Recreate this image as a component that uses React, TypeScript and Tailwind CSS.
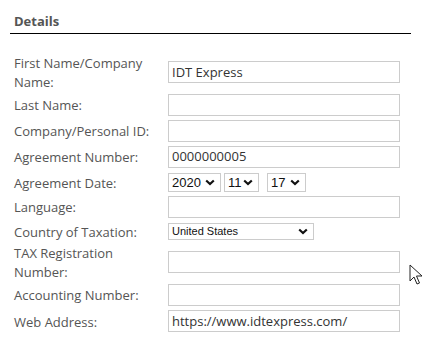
import React from "react";

const font = { fontFamily: '"Open Sans", "Liberation Sans", sans-serif' };
const arial = { fontFamily: '"Liberation Sans", Arial, sans-serif' };

function Chevron() {
  return (
    <svg width="10" height="7" viewBox="0 0 10 7">
      <path d="M1.2 1.5 L5 5 L8.8 1.5" fill="none" stroke="#111" strokeWidth="2.2" />
    </svg>
  );
}

function TextBox({ value = "" }: { value?: string }) {
  return (
    <div className="w-[232px] h-[22px] border border-[#cccccc] pl-[3px] flex items-center text-[13px] text-[#333] leading-none">
      {value}
    </div>
  );
}

function Select({ value, w, h = "h-[19px]", text = "text-[13px]" }: { value: string; w: string; h?: string; text?: string }) {
  return (
    <div
      className={`${w} ${h} border border-[#cccccc] pl-[3px] pr-[5px] flex items-center justify-between ${text} text-[#111] leading-none`}
      style={arial}
    >
      <span>{value}</span>
      <Chevron />
    </div>
  );
}

function Row({ label, h, children }: { label: React.ReactNode; h: string; children: React.ReactNode }) {
  return (
    <div className={`flex items-center ${h}`}>
      <div className="w-[154px] pt-[2px] text-[13px] leading-[19px] text-[#555]">{label}</div>
      {children}
    </div>
  );
}

export default function App() {
  return (
    <div className="w-[429px] h-[350px] bg-white relative overflow-hidden" style={font}>
      {/* Header */}
      <div className="ml-[10px] w-[401px] border-b border-black pt-[12px] pb-[2px] pl-[4px]">
        <h2 className="text-[13px] leading-[19px] font-bold text-[#555]">Details</h2>
      </div>

      <div className="pl-[14px] mt-[19px]">
        <Row
          h="h-[38px]"
          label={
            <>
              <span className="block">First Name/Company</span>
              <span className="block">Name:</span>
            </>
          }
        >
          <TextBox value="IDT Express" />
        </Row>
        <Row h="h-[27px]" label="Last Name:">
          <TextBox />
        </Row>
        <Row h="h-[25px]" label="Company/Personal ID:">
          <TextBox />
        </Row>
        <Row h="h-[27px]" label="Agreement Number:">
          <TextBox value="0000000005" />
        </Row>
        <Row h="h-[24px]" label="Agreement Date:">
          <div className="flex">
            <Select value="2020" w="w-[53px]" />
            <div className="ml-[3px]">
              <Select value="11" w="w-[35px]" />
            </div>
            <div className="ml-[8px]">
              <Select value="17" w="w-[39px]" />
            </div>
          </div>
        </Row>
        <Row h="h-[25px]" label="Language:">
          <TextBox />
        </Row>
        <Row h="h-[24px]" label="Country of Taxation:">
          <Select value="United States" w="w-[146px]" h="h-[17px]" text="text-[11px]" />
        </Row>
        <Row
          h="h-[38px]"
          label={
            <>
              <span className="block">TAX Registration</span>
              <span className="block">Number:</span>
            </>
          }
        >
          <TextBox />
        </Row>
        <Row h="h-[27px]" label="Accounting Number:">
          <TextBox />
        </Row>
        <Row h="h-[26px]" label="Web Address:">
          <TextBox value="https://www.idtexpress.com/" />
        </Row>
      </div>

      {/* mouse pointer */}
      <svg className="absolute left-[409px] top-[264px]" width="14" height="22" viewBox="0 0 14 22">
        <path
          d="M1 1 L1 17 L5 13 L8 20 L10.5 19 L7.5 12 L13 12 Z"
          fill="white"
          stroke="#222"
          strokeWidth="1"
          strokeLinejoin="round"
        />
      </svg>
    </div>
  );
}
